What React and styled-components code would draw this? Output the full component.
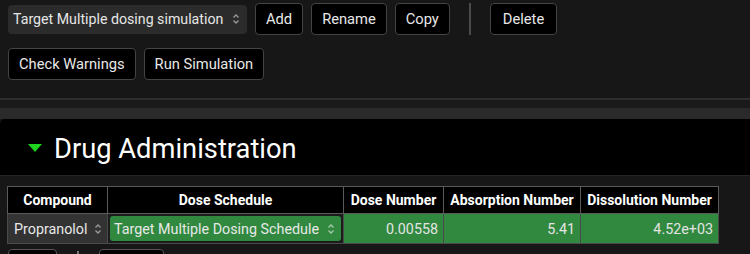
import React from 'react';
import styled, { createGlobalStyle } from 'styled-components';

const GlobalStyle = createGlobalStyle`
  html, body {
    margin: 0;
    padding: 0;
    background: #171717;
    overflow: hidden;
  }
  body {
    font-family: Roboto, "Liberation Sans", Arial, sans-serif;
    color: #e8e8e8;
  }
`;

const Page = styled.div`
  width: 750px;
  height: 254px;
  overflow: hidden;
  background: #171717;
`;

const Toolbar = styled.div`
  display: flex;
  flex-direction: column;
  gap: 13px;
  padding: 3px 8px 18px 8px;
`;

const ToolRow = styled.div`
  display: flex;
  align-items: center;
  gap: 8px;
`;

const SelectBox = styled.div`
  display: flex;
  align-items: center;
  justify-content: space-between;
  width: 239px;
  height: 29px;
  box-sizing: border-box;
  padding: 0 7px 0 5px;
  background: #2b2b2b;
  border-radius: 4px;
  font-size: 14.2px;
  color: #e6e6e6;
  white-space: nowrap;
`;

const Button = styled.button`
  height: 32px;
  box-sizing: border-box;
  padding: 0 ${(p) => p.pad || 10}px;
  background: #000;
  color: #e8e8e8;
  border: 1px solid #444;
  border-radius: 4px;
  font-family: inherit;
  font-size: 14.7px;
  cursor: pointer;
`;

const Divider = styled.div`
  width: 2px;
  height: 32px;
  background: #4a4a4a;
  margin: 0 11px 0 11px;
`;

const RuleLine = styled.div`
  height: ${(p) => p.h}px;
  background: ${(p) => p.c};
`;

const SectionHeader = styled.div`
  display: flex;
  align-items: center;
  gap: 12px;
  height: 56px;
  padding-left: 28px;
  background: #000;
  border-top-left-radius: 5px;
  border-bottom: 1px solid #242424;
`;

const Triangle = styled.div`
  width: 0;
  height: 0;
  border-left: 7px solid transparent;
  border-right: 7px solid transparent;
  border-top: 8px solid #1ed41e;
  margin-top: 2px;
`;

const Title = styled.h2`
  margin: 0;
  padding-top: 4px;
  font-size: 27.3px;
  font-weight: 400;
  color: #fff;
`;

const TableWrap = styled.div`
  padding: 10px 0 0 7px;
`;

const Table = styled.table`
  border-collapse: collapse;
  font-size: 14.3px;
`;

const Th = styled.th`
  width: ${(p) => p.w}px;
  height: 27px;
  box-sizing: border-box;
  padding: 0;
  background: #000;
  border: 1px solid #5a5a5a;
  font-size: 14px;
  font-weight: 700;
  color: #fff;
  text-align: center;
  white-space: nowrap;
`;

const Td = styled.td`
  height: 29px;
  box-sizing: border-box;
  padding: ${(p) => (p.inset ? '2px' : '0 5px')};
  background: ${(p) => p.bg};
  border: 1px solid #4a4a4a;
  text-align: ${(p) => p.align || 'left'};
  color: #e4e4e4;
  white-space: nowrap;
`;

const CellSelect = styled.div`
  display: flex;
  align-items: center;
  justify-content: space-between;
  height: 25px;
  padding: 0 ${(p) => p.padRight || 6}px 0 4px;
  background: ${(p) => p.bg};
  border-radius: ${(p) => p.radius || 0}px;
  color: #e8e8e8;
`;

const BottomRow = styled.div`
  display: flex;
  align-items: flex-start;
  gap: 20px;
  padding: 5px 0 0 8px;
`;

const Stub = styled.div`
  width: ${(p) => p.w}px;
  height: 24px;
  border: 1px solid #555;
  border-radius: 4px;
  background: #000;
`;

const Tick = styled.div`
  width: 2px;
  height: 10px;
  margin-top: 2px;
  background: #777;
`;

const Arrows = ({ color = '#9a9a9a' }) => (
  <svg width="8" height="12" viewBox="0 0 8 12" fill="none">
    <path d="M1.5 4.5 L4 2 L6.5 4.5" stroke={color} strokeWidth="1.3" />
    <path d="M1.5 7.5 L4 10 L6.5 7.5" stroke={color} strokeWidth="1.3" />
  </svg>
);

const green = '#30893f';

const App = () => (
  <Page>
    <GlobalStyle />
    <Toolbar>
      <ToolRow>
        <SelectBox>
          Target Multiple dosing simulation
          <Arrows />
        </SelectBox>
        <Button>Add</Button>
        <Button>Rename</Button>
        <Button>Copy</Button>
        <Divider />
        <Button pad={12}>Delete</Button>
      </ToolRow>
      <ToolRow>
        <Button pad={10}>Check Warnings</Button>
        <Button pad={10}>Run Simulation</Button>
      </ToolRow>
    </Toolbar>
    <RuleLine h={2} c="#2e2e2e" />
    <RuleLine h={8} c="#1a1a1a" />
    <RuleLine h={11} c="#2a2a2a" />
    <SectionHeader>
      <Triangle />
      <Title>Drug Administration</Title>
    </SectionHeader>
    <TableWrap>
      <Table>
        <thead>
          <tr>
            <Th w={100}>Compound</Th>
            <Th w={236}>Dose Schedule</Th>
            <Th w={100}>Dose Number</Th>
            <Th w={137}>Absorption Number</Th>
            <Th w={138}>Dissolution Number</Th>
          </tr>
        </thead>
        <tbody>
          <tr>
            <Td bg="#333" inset>
              <CellSelect bg="#333" padRight={3}>
                Propranolol
                <Arrows />
              </CellSelect>
            </Td>
            <Td bg="#1c1c1c" inset>
              <CellSelect bg={green} radius={3}>
                Target Multiple Dosing Schedule
                <Arrows color="#a8c8ad" />
              </CellSelect>
            </Td>
            <Td bg={green} align="right">0.00558</Td>
            <Td bg={green} align="right">5.41</Td>
            <Td bg={green} align="right">4.52e+03</Td>
          </tr>
        </tbody>
      </Table>
    </TableWrap>
    <BottomRow>
      <Stub w={47} />
      <Tick />
      <Stub w={63} />
    </BottomRow>
  </Page>
);

export default App;
